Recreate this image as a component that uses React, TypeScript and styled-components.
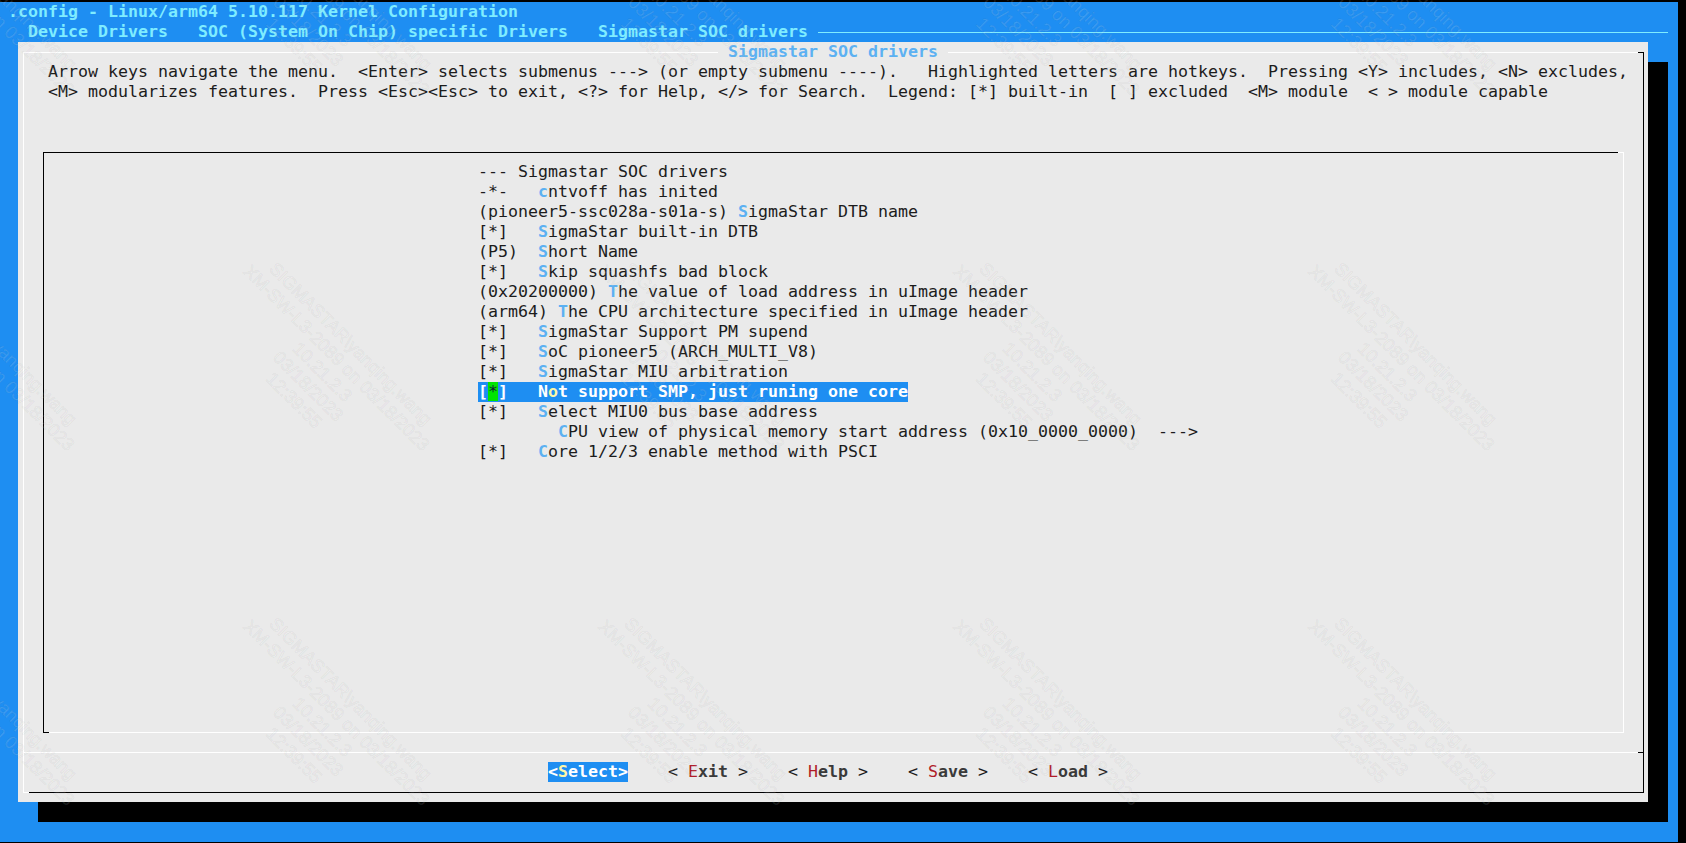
import React from "react";
import styled, { createGlobalStyle } from "styled-components";

const Global = createGlobalStyle`
  html, body { margin: 0; padding: 0; background: #000; overflow: hidden; }
  * { box-sizing: border-box; }
`;

const BLUE = "#1e8ef2";
const GRAY = "#eaeaea";
const INK = "#1c1c1c";
const HOT = "#5cb1f2";

const Screen = styled.div`
  position: relative;
  height: 843px;
  padding-top: 2px;
  overflow: hidden;
  font-family: "DejaVu Sans Mono", "Liberation Mono", monospace;
  font-size: 16.61px;
  line-height: 20px;
  white-space: pre;
  color: ${INK};
`;

const Backdrop = styled.div`
  width: 1678px;
  height: 840px;
  background: ${BLUE};
`;

const BackTitle = styled.div`
  height: 20px;
  padding-left: 8px;
  color: #7fecff;
  font-weight: bold;
`;

const Breadcrumbs = styled.div`
  display: flex;
  align-items: center;
  height: 20px;
  padding-left: 28px;
  margin-right: 10px;
  color: #7fecff;
  font-weight: bold;
`;

const Crumb = styled.span`
  margin-right: 30px;
  &:last-of-type { margin-right: 10px; }
`;

const Rule = styled.div`
  flex: 1;
  height: 1px;
  background: #7fecff;
`;

const Dialog = styled.div`
  width: 1630px;
  height: 760px;
  margin-left: 18px;
  padding: 10px 4px 9px 5px;
  background: ${GRAY};
  box-shadow: 20px 20px 0 #000;
`;

const Frame = styled.div`
  position: relative;
  height: 741px;
  border: 1px solid #000;
  border-top-color: #fff;
  border-left-color: #fff;

  &::before {
    content: "";
    position: absolute;
    top: -1px;
    right: -1px;
    width: 6px;
    height: 1px;
    background: #000;
  }
  &::after {
    content: "";
    position: absolute;
    bottom: -1px;
    left: -1px;
    width: 6px;
    height: 1px;
    background: #fff;
  }
`;

const DialogTitle = styled.div`
  position: absolute;
  top: -11px;
  left: 694px;
  padding: 0 10px;
  background: ${GRAY};
  color: ${HOT};
  font-weight: bold;
`;

const Help = styled.div`
  height: 40px;
  margin: 9px 0 0 24px;
`;

const MenuBox = styled.div`
  position: relative;
  width: 1581px;
  height: 581px;
  margin: 50px 0 0 19px;
  padding: 9px 0 0 434px;
  border: 1px solid #fff;
  border-top-color: #000;
  border-left-color: #000;

  &::before {
    content: "";
    position: absolute;
    top: -1px;
    right: -1px;
    width: 6px;
    height: 1px;
    background: #fff;
  }
  &::after {
    content: "";
    position: absolute;
    bottom: -1px;
    left: -1px;
    width: 6px;
    height: 1px;
    background: #000;
  }
`;

const MenuRow = styled.div<{ $selected?: boolean }>`
  width: fit-content;
  height: 20px;
  background: ${(p) => (p.$selected ? BLUE : "transparent")};
  color: ${(p) => (p.$selected ? "#fff" : INK)};
  font-weight: ${(p) => (p.$selected ? "bold" : "normal")};
`;

const Hotkey = styled.span`
  color: ${HOT};
  font-weight: bold;
`;

const SelectedHotkey = styled.span`
  color: #fdf6a8;
  font-weight: bold;
`;

const Cursor = styled.span`
  background: #00e400;
  color: #123;
  font-weight: normal;
`;

const Separator = styled.div`
  position: relative;
  height: 1px;
  margin-top: 19px;
  background: #fff;

  &::after {
    content: "";
    position: absolute;
    top: 0;
    right: 0;
    width: 5px;
    height: 1px;
    background: #000;
  }
`;

const ButtonRow = styled.div`
  display: flex;
  gap: 40px;
  height: 20px;
  margin-top: 9px;
  padding-left: 524px;
`;

const Button = styled.span<{ $active?: boolean }>`
  background: ${(p) => (p.$active ? BLUE : "transparent")};
  color: ${(p) => (p.$active ? "#fff" : INK)};
  font-weight: ${(p) => (p.$active ? "bold" : "normal")};
`;

const ButtonText = styled.span`
  color: #3a3a3a;
  font-weight: bold;
`;

const ButtonKey = styled.span`
  color: #b01c28;
`;

const Watermarks = styled.div`
  position: absolute;
  top: -118px;
  left: -97px;
  display: grid;
  grid-template-columns: repeat(5, 355px);
  grid-auto-rows: 355px;
  pointer-events: none;
`;

const Stamp = styled.div`
  width: 282px;
  height: 100px;
  transform-origin: 0 0;
  transform: rotate(45deg);
  font-family: "Liberation Sans", Arial, sans-serif;
  font-size: 18px;
  line-height: 20px;
  text-align: center;
  color: rgba(255, 255, 255, 0.12);
  -webkit-text-stroke: 1px rgba(40, 40, 40, 0.05);
`;

type Item = { before: string; hot: string; after: string };

const items: Item[] = [
  { before: "-*-   ", hot: "c", after: "ntvoff has inited" },
  { before: "(pioneer5-ssc028a-s01a-s) ", hot: "S", after: "igmaStar DTB name" },
  { before: "[*]   ", hot: "S", after: "igmaStar built-in DTB" },
  { before: "(P5)  ", hot: "S", after: "hort Name" },
  { before: "[*]   ", hot: "S", after: "kip squashfs bad block" },
  { before: "(0x20200000) ", hot: "T", after: "he value of load address in uImage header" },
  { before: "(arm64) ", hot: "T", after: "he CPU architecture specified in uImage header" },
  { before: "[*]   ", hot: "S", after: "igmaStar Support PM supend" },
  { before: "[*]   ", hot: "S", after: "oC pioneer5 (ARCH_MULTI_V8)" },
  { before: "[*]   ", hot: "S", after: "igmaStar MIU arbitration" },
];

const itemsAfter: Item[] = [
  { before: "[*]   ", hot: "S", after: "elect MIU0 bus base address" },
  { before: "        ", hot: "C", after: "PU view of physical memory start address (0x10_0000_0000)  --->" },
  { before: "[*]   ", hot: "C", after: "ore 1/2/3 enable method with PSCI" },
];

const Row = ({ before, hot, after }: Item) => (
  <MenuRow>
    {before}
    <Hotkey>{hot}</Hotkey>
    {after}
  </MenuRow>
);

const buttons = [
  { key: "E", rest: "xit" },
  { key: "H", rest: "elp" },
  { key: "S", rest: "ave" },
  { key: "L", rest: "oad" },
];

const stamps = Array.from({ length: 15 }, (_, i) => i);

export default function App() {
  return (
    <Screen>
      <Global />
      <Backdrop>
        <BackTitle>.config - Linux/arm64 5.10.117 Kernel Configuration</BackTitle>
        <Breadcrumbs>
          <Crumb>Device Drivers</Crumb>
          <Crumb>SOC (System On Chip) specific Drivers</Crumb>
          <Crumb>Sigmastar SOC drivers</Crumb>
          <Rule />
        </Breadcrumbs>
        <Dialog>
          <Frame>
            <DialogTitle>Sigmastar SOC drivers</DialogTitle>
            <Help>
              {"Arrow keys navigate the menu.  <Enter> selects submenus ---> (or empty submenu ----).   Highlighted letters are hotkeys.  Pressing <Y> includes, <N> excludes,\n<M> modularizes features.  Press <Esc><Esc> to exit, <?> for Help, </> for Search.  Legend: [*] built-in  [ ] excluded  <M> module  < > module capable"}
            </Help>
            <MenuBox>
              <MenuRow>--- Sigmastar SOC drivers</MenuRow>
              {items.map((it) => (
                <Row key={it.after} {...it} />
              ))}
              <MenuRow $selected>
                [<Cursor>*</Cursor>]{"   N"}
                <SelectedHotkey>o</SelectedHotkey>t support SMP, just runing one core
              </MenuRow>
              {itemsAfter.map((it) => (
                <Row key={it.after} {...it} />
              ))}
            </MenuBox>
            <Separator />
            <ButtonRow>
              <Button $active>
                {"<"}
                <SelectedHotkey>S</SelectedHotkey>
                {"elect>"}
              </Button>
              {buttons.map((b) => (
                <Button key={b.key}>
                  {"< "}
                  <ButtonKey>{b.key}</ButtonKey>
                  <ButtonText>{b.rest}</ButtonText>
                  {" >"}
                </Button>
              ))}
            </ButtonRow>
          </Frame>
        </Dialog>
      </Backdrop>
      <Watermarks>
        {stamps.map((i) => (
          <div key={i}>
            <Stamp>
              {"SIGMASTAR\\yanqing.wang\nXM-SW-L3-2089 on 03/18/2023\n10.21.2.3\n03/18/2023\n12:39:55"}
            </Stamp>
          </div>
        ))}
      </Watermarks>
    </Screen>
  );
}
